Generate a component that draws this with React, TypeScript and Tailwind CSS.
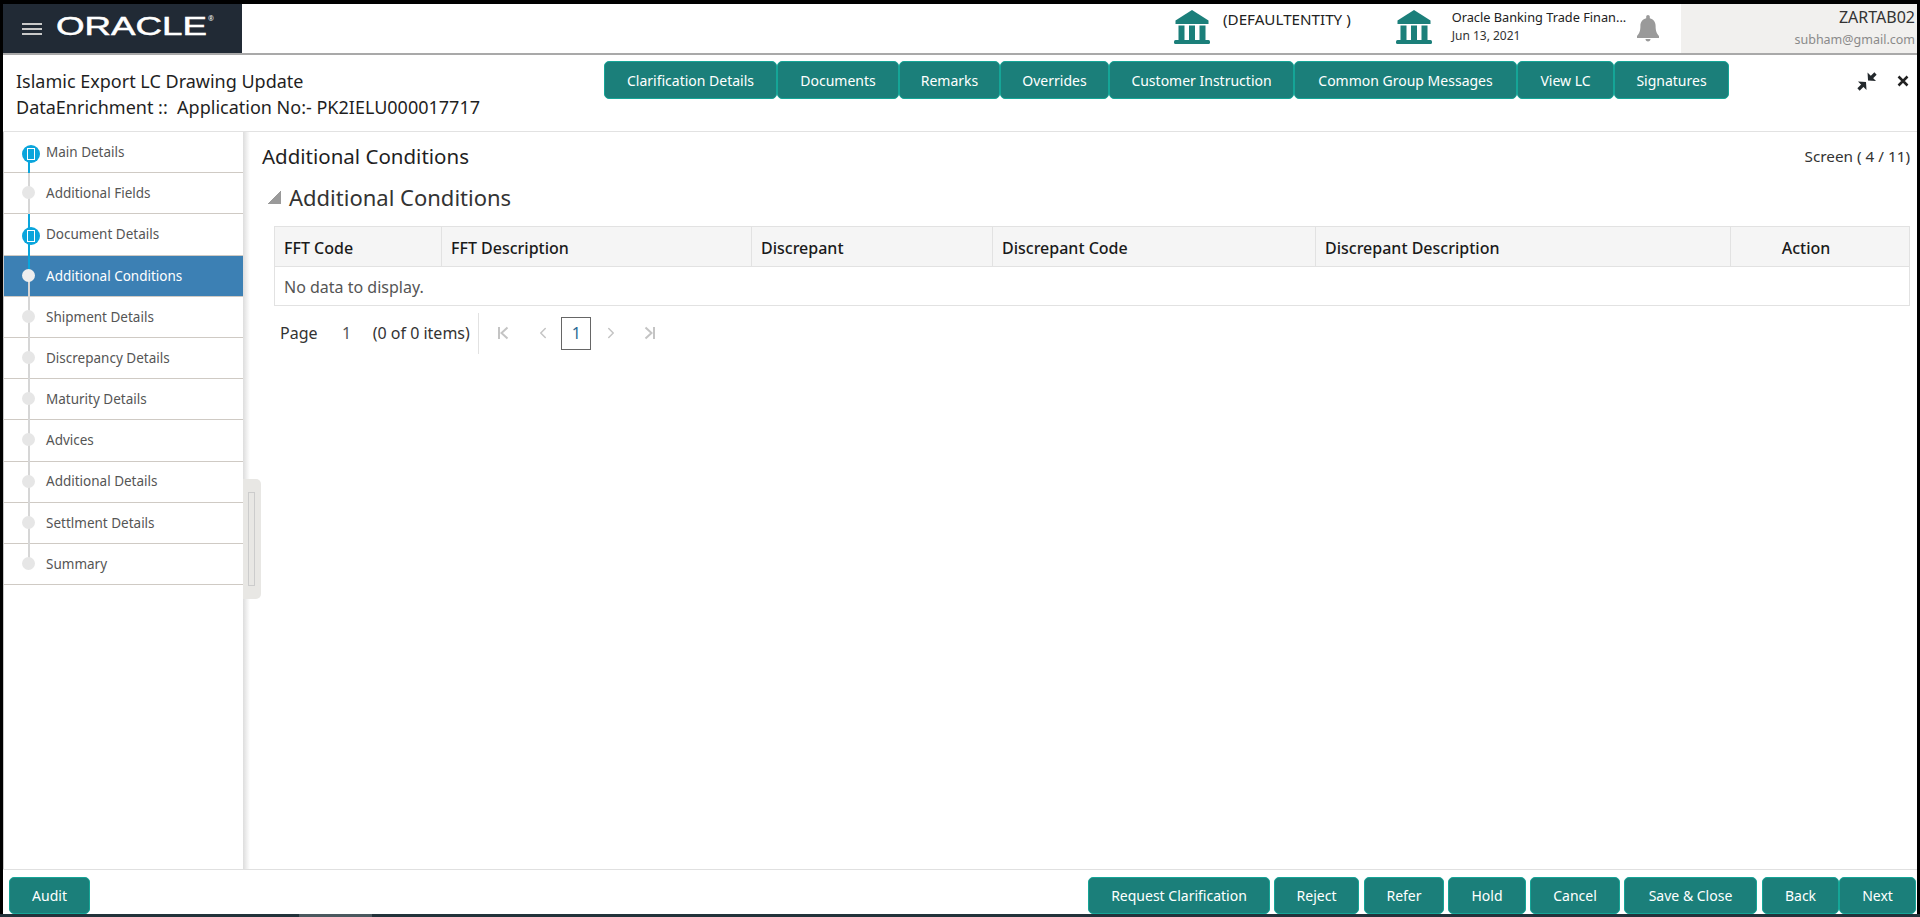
import { ChevronLeft, ChevronRight } from "lucide-react";

const cyan = "bg-[#0aa5dc]";
const grey = "bg-[#d6d6d6]";

const steps = [
  { label: "Main Details", state: "started", top: "", bottom: cyan },
  { label: "Additional Fields", state: "idle", top: grey, bottom: grey },
  { label: "Document Details", state: "started", top: cyan, bottom: cyan },
  { label: "Additional Conditions", state: "current", top: cyan, bottom: grey },
  { label: "Shipment Details", state: "idle", top: grey, bottom: grey },
  { label: "Discrepancy Details", state: "idle", top: grey, bottom: grey },
  { label: "Maturity Details", state: "idle", top: grey, bottom: grey },
  { label: "Advices", state: "idle", top: grey, bottom: grey },
  { label: "Additional Details", state: "idle", top: grey, bottom: grey },
  { label: "Settlment Details", state: "idle", top: grey, bottom: grey },
  { label: "Summary", state: "idle", top: grey, bottom: "" },
];

const tabs = [
  { label: "Clarification Details", width: "w-[173px]" },
  { label: "Documents", width: "w-[122px]" },
  { label: "Remarks", width: "w-[101px]" },
  { label: "Overrides", width: "w-[109px]" },
  { label: "Customer Instruction", width: "w-[185px]" },
  { label: "Common Group Messages", width: "w-[223px]" },
  { label: "View LC", width: "w-[97px]" },
  { label: "Signatures", width: "w-[115px]" },
];

const columns = [
  { label: "FFT Code", width: "w-[167px]" },
  { label: "FFT Description", width: "w-[310px]" },
  { label: "Discrepant", width: "w-[241px]" },
  { label: "Discrepant Code", width: "w-[323px]" },
  { label: "Discrepant Description", width: "w-[415px]" },
];

const footerButtons = [
  { label: "Request Clarification", width: "w-[182px]", margin: "ml-0" },
  { label: "Reject", width: "w-[85px]", margin: "ml-1" },
  { label: "Refer", width: "w-[80px]", margin: "ml-[5px]" },
  { label: "Hold", width: "w-[78px]", margin: "ml-1" },
  { label: "Cancel", width: "w-[90px]", margin: "ml-1" },
  { label: "Save & Close", width: "w-[133px]", margin: "ml-1" },
  { label: "Back", width: "w-[77px]", margin: "ml-[5px]" },
  { label: "Next", width: "w-[77px]", margin: "ml-0" },
];

function BankIcon() {
  return (
    <svg viewBox="0 0 36 34" className="h-[34px] w-[36px] fill-[#1b7f7a]">
      <path d="M18 0 34.5 10.5V14H1.5V10.5Z" />
      <rect x="4.5" y="15.5" width="6" height="15" />
      <rect x="15" y="15.5" width="6" height="15" />
      <rect x="25.5" y="15.5" width="6" height="15" />
      <rect x="0" y="30" width="36" height="4" rx="1.5" />
    </svg>
  );
}

function BellIcon() {
  return (
    <svg viewBox="0 0 24 27" className="h-[27px] w-6 fill-[#9a9a9a]">
      <path d="M12 0c1 0 1.800.8 1.800 1.800v1.500c3.600.9 5.800 3.900 5.800 7.700 0 4.900 1 7.400 3.400 10v2H1v-2c2.400-2.600 3.400-5.100 3.400-10 0-3.800 2.200-6.800 5.800-7.700V1.800C10.200.8 11 0 12 0Z" />
      <path d="M9.500 24h5c0 1.500-1 2.500-2.500 2.500S9.500 25.500 9.500 24Z" />
    </svg>
  );
}

function CompressIcon() {
  return (
    <svg viewBox="0 0 20 20" className="h-5 w-5 fill-[#23282c] stroke-[#23282c]">
      <path d="M18.500 2.500 13 8" fill="none" strokeWidth="3.200" />
      <path d="M10.500 1.500 11 9.500 19 10Z" stroke="none" />
      <path d="M1.500 18.500 7 13" fill="none" strokeWidth="3.200" />
      <path d="M1 10.500 9 11 9.500 19Z" stroke="none" />
    </svg>
  );
}

function PagerEdge({ flip }: { flip?: boolean }) {
  return (
    <svg viewBox="0 0 12 14" className={flip ? "h-[14px] w-3 rotate-180" : "h-[14px] w-3"}>
      <path d="M2 1v12M10.500 1.500 4.500 7l6 5.500" fill="none" stroke="#c4c4c4" strokeWidth="2" />
    </svg>
  );
}

function StepMarker({ state }: { state: string }) {
  if (state === "started") {
    return (
      <div className="absolute left-[18px] top-[13px] flex h-[18px] w-[18px] items-center justify-center rounded-full bg-[#0aa5dc]">
        <div className="h-3 w-2 border-[1.5px] border-white" />
      </div>
    );
  }
  return (
    <div
      className={
        state === "current"
          ? "absolute left-[17.5px] top-[13px] h-[13px] w-[13px] rounded-full bg-[#eeeeee]"
          : "absolute left-[17.5px] top-[13px] h-[13px] w-[13px] rounded-full bg-[#e6e6e6]"
      }
    />
  );
}

function TealButton({ label, className }: { label: string; className: string }) {
  return (
    <button className={`flex items-center justify-center rounded-[5px] border border-[#15a597] bg-[#1b7f7a] text-[14px] text-white ${className}`}>
      {label}
    </button>
  );
}

export default function App() {
  return (
    <div className="relative flex h-[917px] w-[1920px] flex-col overflow-hidden bg-black pl-[3px] pr-[3px] pt-[4px] font-['Noto_Sans',sans-serif]">
      {/* Top bar */}
      <header className="flex h-[51px] shrink-0 items-stretch border-b-2 border-[#a9a9a9] bg-white">
        <div className="flex w-[239px] items-center bg-[#212a35] pl-[19px]">
          <div className="flex w-5 flex-col gap-[3px]">
            <div className="h-[2px] bg-[#c9c9c9]" />
            <div className="h-[2px] bg-[#c9c9c9]" />
            <div className="h-[2px] bg-[#c9c9c9]" />
          </div>
          <div className="ml-[15px] -mt-[3px] flex items-start">
            <svg viewBox="0 0 152 24" className="h-6 w-[152px] overflow-visible fill-white stroke-white">
              <text x="-1" y="20" fontSize="25" strokeWidth="0.5" textLength="151" lengthAdjust="spacingAndGlyphs" fontFamily="'Liberation Sans', sans-serif">
                ORACLE
              </text>
            </svg>
            <span className="-ml-[1px] text-[7px] leading-[8px] text-white">®</span>
          </div>
        </div>
        <div className="flex flex-1 items-start">
          <div className="ml-[932px] mt-[6px]">
            <BankIcon />
          </div>
          <span className="ml-[13px] mt-[4px] text-[15.2px] text-[#222222]">(DEFAULTENTITY )</span>
          <div className="ml-[45px] mt-[6px]">
            <BankIcon />
          </div>
          <div className="ml-5 mt-[3px] flex flex-col">
            <span className="text-[12.75px] leading-[21px] text-[#222222]">Oracle Banking Trade Finan...</span>
            <span className="text-[12px] leading-[16px] text-[#333333]">Jun 13, 2021</span>
          </div>
          <div className="ml-[10px] mt-[11px]">
            <BellIcon />
          </div>
          <div className="ml-auto flex h-full w-[236px] flex-col items-end bg-[#f1f0ee] pr-[2px]">
            <span className="mt-[1px] text-[16px] leading-[24px] text-[#333333]">ZARTAB02</span>
            <span className="text-[12.5px] leading-[22px] text-[#8a8a8a]">subham@gmail.com</span>
          </div>
        </div>
      </header>

      {/* Title strip */}
      <div className="relative flex h-[77px] shrink-0 items-start border-b border-[#e2e2e2] bg-white pl-[13px]">
        <div className="pt-[12.5px] text-[18px] leading-[26px] text-[#1f1f1f]">
          <div>Islamic Export LC Drawing Update</div>
          <div>DataEnrichment ::&nbsp; Application No:- PK2IELU000017717</div>
        </div>
        <div className="absolute left-[601px] top-[6px] flex gap-0">
          {tabs.map((t) => (
            <TealButton key={t.label} label={t.label} className={`h-[38px] ${t.width}`} />
          ))}
        </div>
        <div className="absolute left-[1854px] top-[16px]">
          <CompressIcon />
        </div>
        <svg viewBox="0 0 12 12" className="absolute left-[1894px] top-[20px] h-3 w-3">
          <path d="M1.500 1.500 10.500 10.500M10.500 1.500 1.500 10.500" stroke="#222222" strokeWidth="2.500" />
        </svg>
      </div>

      {/* Body */}
      <div className="flex min-h-0 flex-1 bg-white">
        <nav className="relative w-[240px] shrink-0 border-l border-[#c8c8c8]">
          {steps.map((s) => (
            <div
              key={s.label}
              className={
                s.state === "current"
                  ? "relative flex h-[41.2px] items-center border-b border-[#cfcac4] bg-[#3c80b4] pl-[42px] text-[13.5px] text-white"
                  : "relative flex h-[41.2px] items-center border-b border-[#cfcac4] pl-[42px] text-[13.5px] text-[#555555]"
              }
            >
              {s.top && <div className={`absolute left-[24px] top-0 h-[20px] w-[1.5px] ${s.top}`} />}
              {s.bottom && <div className={`absolute left-[24px] top-[20px] h-[21.2px] w-[1.5px] ${s.bottom}`} />}
              <StepMarker state={s.state} />
              <span className="relative">{s.label}</span>
            </div>
          ))}
        </nav>

        <main className="min-w-0 flex-1 pl-[19px] pr-[7px]">
          <div className="flex items-center justify-between pt-[10px]">
            <h1 className="text-[20.5px] font-normal leading-[28px] text-[#1f1f1f]">Additional Conditions</h1>
            <span className="text-[15.3px] text-[#333333]">Screen ( 4 / 11)</span>
          </div>
          <div className="mt-[12px] flex items-center pl-[6px]">
            <div className="h-[13px] w-[13px] bg-[linear-gradient(135deg,transparent_50%,#9a9a9a_50%)]" />
            <h2 className="ml-2 text-[22px] font-normal leading-[30px] text-[#333333]">Additional Conditions</h2>
          </div>
          <div className="ml-[12px] mt-[14px] border border-[#e2e2e2]">
            <div className="flex h-[40px] border-b border-[#e2e2e2] bg-[#f5f5f5] text-[16px] font-medium text-[#1a1a1a]">
              {columns.map((c) => (
                <div key={c.label} className={`flex items-center border-r border-[#e2e2e2] pl-[9px] pt-[2px] ${c.width}`}>
                  {c.label}
                </div>
              ))}
              <div className="flex flex-1 items-center justify-center pr-[28px] pt-[2px]">Action</div>
            </div>
            <div className="flex h-[38px] items-center pl-[9px] pt-[1px] text-[16px] text-[#555555]">No data to display.</div>
          </div>
          <div className="ml-[18px] mt-[6px] flex h-[41px] items-center pt-[1px] text-[16px]">
            <span className="text-[#333333]">Page</span>
            <span className="ml-[24.5px] text-[#555555]">1</span>
            <span className="ml-[21.5px] text-[#333333]">(0 of 0 items)</span>
            <div className="ml-[8px] h-[41px] w-px bg-[#e2e2e2]" />
            <div className="ml-[18.5px] flex items-center text-[#c4c4c4]">
              <PagerEdge />
              <ChevronLeft className="ml-[24.5px] h-[18px] w-[18px]" strokeWidth={2} />
              <div className="ml-[9.5px] flex h-[33px] w-[30px] items-center justify-center border border-[#666666] text-[16px] text-[#2a6a94]">1</div>
              <ChevronRight className="ml-[10.5px] h-[18px] w-[18px]" strokeWidth={2} />
              <div className="ml-[24.5px]">
                <PagerEdge flip />
              </div>
            </div>
          </div>
        </main>
      </div>

      {/* Rail shadow and splitter sit over the body */}
      <div className="absolute left-[243px] top-[132px] h-[756px] w-[7px] bg-[linear-gradient(90deg,#dddddd,#ffffff)]" />
      <div className="absolute left-[243px] top-[479px] h-[120px] w-[18px] rounded-r-[5px] bg-[#e8e7e4] py-[13px] pl-[5px]">
        <div className="h-full w-[7px] border border-[#cccccc]" />
      </div>

      {/* Footer */}
      <footer className="relative flex h-[45px] shrink-0 items-end justify-between border-t border-[#e0e0e0] bg-white pl-[6px] pr-[1px]">
        <TealButton label="Audit" className="h-[37px] w-[81px]" />
        <div className="flex">
          {footerButtons.map((b) => (
            <TealButton key={b.label} label={b.label} className={`h-[37px] ${b.width} ${b.margin}`} />
          ))}
        </div>
      </footer>
      <div className="-ml-[3px] -mr-[3px] flex h-[3px] shrink-0 bg-[#22323a]">
        <div className="ml-[299px] w-[73px] bg-[#4a585e]" />
      </div>
    </div>
  );
}
